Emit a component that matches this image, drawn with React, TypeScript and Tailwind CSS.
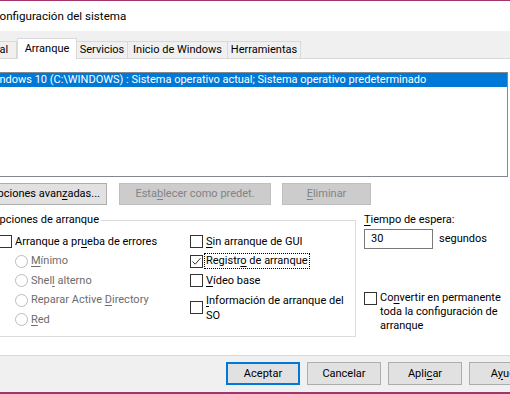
import type { ReactNode } from "react";

const magenta = "bg-[#a4346c]";

function Box({ checked }: { checked?: boolean }) {
  return (
    <span className="flex h-[13px] w-[13px] shrink-0 items-center justify-center border border-[#333333] bg-white">
      {checked && (
        <svg width="11" height="11" viewBox="0 0 11 11">
          <path d="M1.5 5.5 L4.2 8.2 L9.5 2.2" stroke="#333333" strokeWidth="1" fill="none" />
        </svg>
      )}
    </span>
  );
}

function Radio() {
  return <span className="h-[13px] w-[13px] shrink-0 rounded-full border border-[#bcbcbc] bg-white" />;
}

// label with an access-key letter underlined
function K({ pre, k, post }: { pre?: string; k: string; post?: string }) {
  return (
    <>
      {pre}
      <span className="underline decoration-1 underline-offset-[2px]">{k}</span>
      {post}
    </>
  );
}

function Tab({ w, selected, children }: { w: string; selected?: boolean; children: ReactNode }) {
  return selected ? (
    <div className={`relative z-10 -mb-px flex h-[21px] items-center justify-center border-x border-t border-[#d9d9d9] bg-white ${w}`}>
      {children}
    </div>
  ) : (
    <div className={`flex h-[17px] items-center justify-center border-r border-t border-[#d9d9d9] bg-[#f0f0f0] ${w}`}>
      {children}
    </div>
  );
}

function Btn({ w, disabled, focus, children }: { w: string; disabled?: boolean; focus?: boolean; children: ReactNode }) {
  const look = disabled
    ? "border-[#bfbfbf] bg-[#cccccc] text-[#838383]"
    : focus
      ? "border-2 border-[#0078d7] bg-[#e1e1e1]"
      : "border-[#adadad] bg-[#e1e1e1]";
  return (
    <div className={`flex shrink-0 items-center justify-center border ${look} ${w}`}>{children}</div>
  );
}

function Row({ children }: { children: ReactNode }) {
  return <div className="flex h-[19.5px] items-center">{children}</div>;
}

export default function App() {
  return (
    <div className="flex h-[394px] w-[510px] flex-col overflow-hidden bg-[#f0f0f0] font-['Segoe_UI',Roboto,sans-serif] text-[11px] leading-[14px] text-black">
      <div className={`h-px shrink-0 ${magenta}`} />
      <div className="flex h-[30px] shrink-0 items-center bg-white">
        <span className="-ml-[8px] text-[11.6px]">Configuración del sistema</span>
      </div>

      {/* tabs */}
      <div className="mt-[7px] -ml-[38px] flex h-[20px] shrink-0 items-end">
        <div className="flex h-[17px] w-[55px] items-center justify-center border-x border-t border-[#d9d9d9]">General</div>
        <Tab w="w-[60px]" selected>Arranque</Tab>
        <Tab w="w-[51px]">Servicios</Tab>
        <Tab w="w-[100px]">Inicio de Windows</Tab>
        <Tab w="w-[73px]">Herramientas</Tab>
      </div>

      {/* tab page */}
      <div className="-ml-[30px] h-[298px] w-[560px] shrink-0 border border-[#d9d9d9] bg-white">
        <div className="mt-[13px] ml-[12px] h-[105px] w-[525px] border border-[#828790] bg-white">
          <div className="h-[14px] whitespace-nowrap bg-[#0078d7] pl-[3px] leading-[14px] text-white">
            Windows 10 (C:\WINDOWS) : Sistema operativo actual; Sistema operativo predeterminado
          </div>
        </div>

        <div className="mt-[6px] ml-[12px] flex h-[22px]">
          <Btn w="w-[124px]">
            <K pre="Opciones avan" k="z" post="adas..." />
          </Btn>
          <div className="ml-[12px] flex">
            <Btn w="w-[152px]" disabled>
              <K pre="Esta" k="b" post="lecer como predet." />
            </Btn>
          </div>
          <div className="ml-[11px] flex">
            <Btn w="w-[89px]" disabled>
              <K k="E" post="liminar" />
            </Btn>
          </div>
        </div>

        <div className="mt-[8px] ml-[9px] flex">
          <fieldset className="h-[124px] w-[376px] shrink-0 border border-[#dcdcdc]">
            <legend className="ml-[9px] px-[2px] leading-[14px]">Opciones de arranque</legend>
            <div className="flex pt-[5px]">
              <div className="ml-[18px] flex w-[191px] shrink-0 flex-col">
                <Row>
                  <Box />
                  <span className="ml-[3px]">
                    <K pre="Arranque a pr" k="u" post="eba de errores" />
                  </span>
                </Row>
                <div className="flex flex-col pl-[16px] text-[#6d6d6d]">
                  <Row>
                    <Radio />
                    <span className="ml-[3px]">
                      <K k="M" post="ínimo" />
                    </span>
                  </Row>
                  <Row>
                    <Radio />
                    <span className="ml-[3px]">
                      <K pre="Shel" k="l" post=" alterno" />
                    </span>
                  </Row>
                  <Row>
                    <Radio />
                    <span className="ml-[3px]">
                      <K pre="Reparar Active " k="D" post="irectory" />
                    </span>
                  </Row>
                  <Row>
                    <Radio />
                    <span className="ml-[3px]">
                      <K k="R" post="ed" />
                    </span>
                  </Row>
                </div>
              </div>
              <div className="flex flex-col">
                <Row>
                  <Box />
                  <span className="ml-[3px]">
                    <K k="S" post="in arranque de GUI" />
                  </span>
                </Row>
                <Row>
                  <Box checked />
                  <span className="ml-[2px] px-px outline-1 outline-offset-0 outline-black outline-dotted">
                    <K pre="Registr" k="o" post=" de arranque" />
                  </span>
                </Row>
                <Row>
                  <Box />
                  <span className="ml-[3px]">
                    <K k="V" post="ídeo base" />
                  </span>
                </Row>
                <div className="mt-[2px] flex items-center">
                  <Box />
                  <span className="ml-[3px] w-[144px] leading-[15px]">
                    <K k="I" post="nformación de arranque del SO" />
                  </span>
                </div>
              </div>
            </div>
          </fieldset>

          <div className="ml-[8px] flex flex-col">
            <div>
              <K k="T" post="iempo de espera:" />
            </div>
            <div className="mt-[2px] flex items-center">
              <div className="flex h-[20px] w-[69px] items-center border border-[#7a7a7a] bg-white pl-[6px]">30</div>
              <span className="ml-[6px]">segundos</span>
            </div>
            <div className="mt-[42px] flex items-start">
              <div className="mt-px">
                <Box />
              </div>
              <span className="ml-[3px] w-[130px] leading-[14px]">
                <K pre="Co" k="n" post="vertir en permanente toda la configuración de arranque" />
              </span>
            </div>
          </div>
        </div>
      </div>

      {/* dialog buttons */}
      <div className="mt-[6px] flex h-[23px] shrink-0 gap-[7px] pl-[226px]">
        <Btn w="w-[74px]" focus>Aceptar</Btn>
        <Btn w="w-[74px]">Cancelar</Btn>
        <Btn w="w-[74px]">
          <K pre="Apli" k="c" post="ar" />
        </Btn>
        <Btn w="w-[74px]">
          <K pre="A" k="y" post="uda" />
        </Btn>
      </div>
      <div className={`mt-[7px] h-[2px] shrink-0 ${magenta}`} />
    </div>
  );
}
